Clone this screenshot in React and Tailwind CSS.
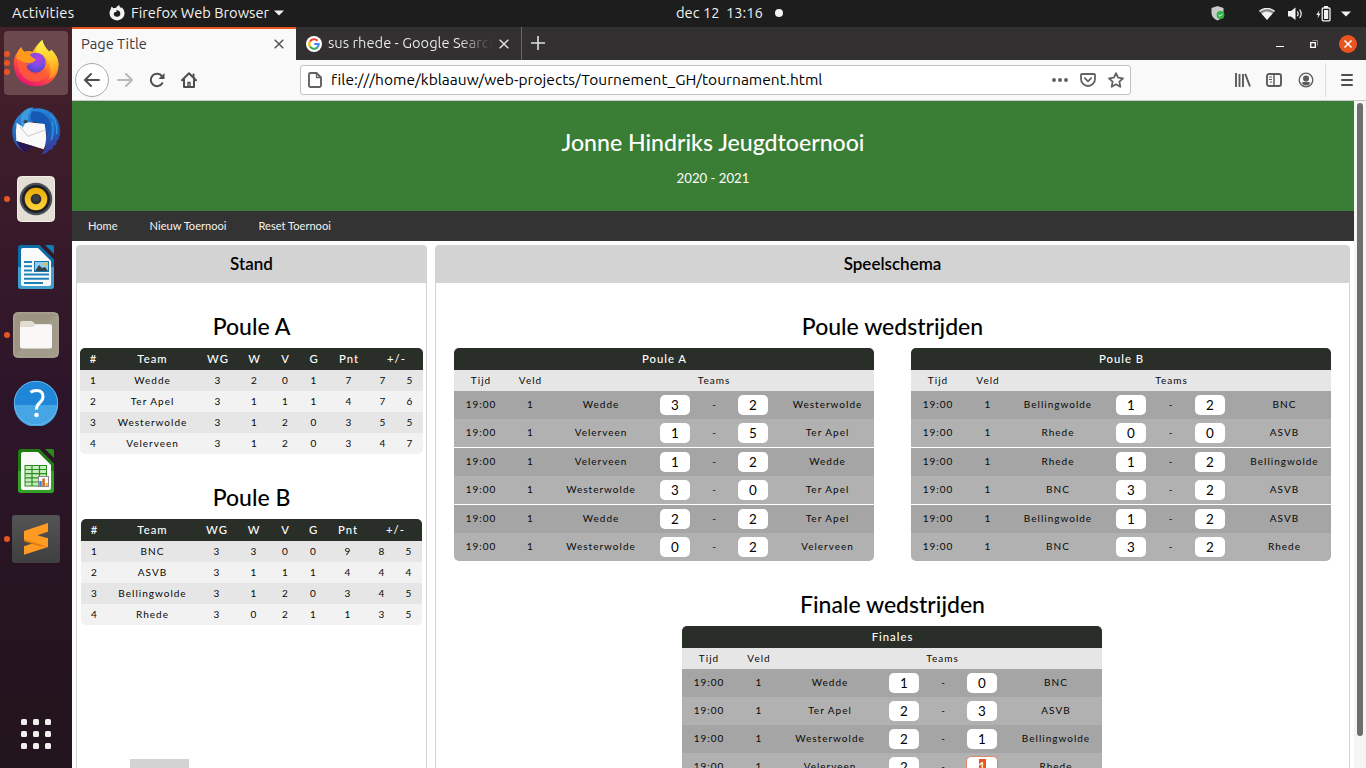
import React from "react";

const UI = "font-['Ubuntu','Noto_Sans',sans-serif]";

/* ---------- dock artwork ---------- */

function FirefoxLogo() {
  return (
    <svg width="48" height="50" viewBox="36 111 144 150">
      <defs>
        <linearGradient id="ffBody" x1="0.8" y1="0.1" x2="0.3" y2="1">
          <stop offset="0" stopColor="#ffe93f" />
          <stop offset="0.35" stopColor="#ffa21f" />
          <stop offset="0.65" stopColor="#ff4a3f" />
          <stop offset="1" stopColor="#e5127a" />
        </linearGradient>
        <linearGradient id="ffFlame" x1="0.4" y1="0" x2="0.6" y2="1">
          <stop offset="0" stopColor="#fff44f" />
          <stop offset="0.55" stopColor="#ffc72b" />
          <stop offset="1" stopColor="#ff8a1e" />
        </linearGradient>
        <radialGradient id="ffGlobe" cx="0.6" cy="0.3" r="0.8">
          <stop offset="0" stopColor="#b63fe0" />
          <stop offset="0.5" stopColor="#7a4be8" />
          <stop offset="1" stopColor="#4a3fb0" />
        </radialGradient>
      </defs>
      <path d="M64 138 Q66 147 72 152 Q84 148 98 152 Q110 130 127 117 Q132 138 148 152 L154 146 Q176 168 176 192 Q172 252 108 256 Q44 252 41 188 Q42 164 51 156 Q55 146 64 138Z" fill="url(#ffBody)" />
      <path d="M127 117 Q130 136 148 152 L154 146 Q176 166 175 192 Q170 222 146 236 Q160 206 144 180 Q132 156 106 154 Q112 130 127 117Z" fill="url(#ffFlame)" />
      <circle cx="107" cy="185" r="30" fill="url(#ffGlobe)" />
      <path d="M64 138 Q58 150 58 166 Q62 186 90 188 Q80 192 80 202 Q90 222 114 220 Q136 214 138 198 Q150 218 128 236 Q98 252 70 228 Q44 200 54 158Z" fill="#ff6036" opacity="0.75" />
      <path d="M50 160 Q56 145 64 139 Q67 149 74 154 Q84 152 90 162 Q96 171 107 174 Q106 182 90 187 Q66 184 50 174Z" fill="#ff9a1f" />
    </svg>
  );
}

function ThunderbirdLogo() {
  return (
    <svg width="50" height="50" viewBox="33 318 150 150">
      <defs>
        <linearGradient id="tb" x1="0.2" y1="0" x2="0.5" y2="1">
          <stop offset="0" stopColor="#2f8fe0" />
          <stop offset="0.6" stopColor="#1d62bd" />
          <stop offset="1" stopColor="#3b3b9c" />
        </linearGradient>
      </defs>
      <path d="M64 340 Q80 322 100 322 L98 326 Q140 320 164 348 Q188 380 176 418 L170 422 L169 434 L160 438 L158 448 L148 450 Q140 462 124 464 L136 444 L140 400 L120 362 L72 372 L50 424 L76 458 Q52 446 42 424 Q36 410 37 388 Q42 358 64 340Z" fill="url(#tb)" />
      <path d="M96 334 Q132 330 148 360 Q158 388 142 404 Q136 372 104 366 Q84 366 96 334Z" fill="#1558b4" />
      <path d="M50 368 L64 378 Q76 366 88 367 L134 372 L138 402 Q140 430 131 448 L49 423 Q46 396 50 368Z" fill="#f9f9f9" />
      <path d="M60 380 L84 409 L134 390" fill="none" stroke="#aab0b4" strokeWidth="2" />
      <path d="M50 424 L104 440 Q86 440 76 458 Q58 448 50 424Z" fill="#2a1554" />
      <path d="M66 342 Q82 324 98 324 Q84 334 84 358 Q74 370 68 384 Q58 366 66 342Z" fill="#3f9bdc" />
      <path d="M150 344 Q174 362 170 402 M156 364 Q164 390 154 420" fill="none" stroke="#2d9adf" strokeWidth="4" />
      <circle cx="76" cy="364" r="5" fill="#19202a" />
      <circle cx="75" cy="363" r="2" fill="#b5a16b" />
    </svg>
  );
}

function SpeakerLogo() {
  return (
    <svg width="38" height="46" viewBox="0 0 38 46">
      <defs>
        <linearGradient id="cone" x1="0" y1="0" x2="0" y2="1">
          <stop offset="0" stopColor="#e9ab07" />
          <stop offset="1" stopColor="#ffd33d" />
        </linearGradient>
      </defs>
      <rect x="0.5" y="0.5" width="37" height="45" rx="4" fill="#e3dfd4" stroke="#f1efe8" />
      <circle cx="19" cy="23" r="16.2" fill="#4a4f57" />
      <circle cx="19" cy="23" r="14" fill="#202124" />
      <circle cx="19" cy="23" r="11.3" fill="url(#cone)" />
      <circle cx="19" cy="23" r="5.3" fill="#2a2c30" />
      <circle cx="19" cy="22" r="3.6" fill="#3b3d42" />
    </svg>
  );
}

function WriterLogo() {
  return (
    <svg width="38" height="46" viewBox="0 0 38 46">
      <path d="M4 1H22.5L37 15.5V42a3 3 0 0 1-3 3H4a3 3 0 0 1-3-3V4a3 3 0 0 1 3-3Z" fill="#0d6ca6" />
      <path d="M1 23H37V42a3 3 0 0 1-3 3H4a3 3 0 0 1-3-3Z" fill="#3f9fce" />
      <path d="M6 4H21L34 17V40a2 2 0 0 1-2 2H6a2 2 0 0 1-2-2V6a2 2 0 0 1 2-2Z" fill="#fafafa" />
      <path d="M28 1H35a2 2 0 0 1 2 2V10Z" fill="#0e7cb5" />
      <path d="M7 18h8M7 22.2h8M7 26.4h8M7 30.6h25M7 34.8h25M7 39h19" stroke="#1e82b9" strokeWidth="2" />
      <rect x="17.5" y="17.5" width="14" height="10" fill="#8fcdf0" stroke="#1377ad" />
      <path d="M18 27l4-6 3 3 3-1 3 4Z" fill="#37424a" />
      <circle cx="28.5" cy="20" r="1.5" fill="#f5b82e" />
    </svg>
  );
}

function FilesLogo() {
  return (
    <svg width="46" height="46" viewBox="0 0 46 46">
      <rect x="0.7" y="0.7" width="44.6" height="44.6" rx="4" fill="#9d9582" stroke="#bdb7a8" />
      <path d="M1 45 45 1V42a3 3 0 0 1-3 3Z" fill="#a9a18f" opacity="0.6" />
      <path d="M7 11a2 2 0 0 1 2-2H19l3.5 3H37a2 2 0 0 1 2 2V20H7Z" fill="#e2ddd1" />
      <path d="M7 15H19.5L23 12.500H37a2 2 0 0 1 2 2V34.500a2 2 0 0 1-2 2H9a2 2 0 0 1-2-2Z" fill="#f9f8f6" />
    </svg>
  );
}

function HelpLogo() {
  return (
    <svg width="46" height="46" viewBox="0 0 46 46">
      <circle cx="23" cy="23" r="22" fill="#1f86d8" />
      <path d="M1 25H45A22 22 0 0 1 1 25Z" fill="#45a5e5" />
      <circle cx="23" cy="23" r="21.700" fill="none" stroke="#67b7ea" strokeWidth="1" />
      <path d="M17.500 12.300Q20 10.500 23.500 10.500Q30 10.500 30 16.500Q30 20 26.500 23Q23.500 25.500 23.500 29.500" fill="none" stroke="#fff" strokeWidth="3" />
      <circle cx="23.500" cy="35" r="2.300" fill="#fff" />
    </svg>
  );
}

function CalcLogo() {
  return (
    <svg width="38" height="46" viewBox="0 0 38 46">
      <path d="M4 1H22.500L37 15.500V42a3 3 0 0 1-3 3H4a3 3 0 0 1-3-3V4a3 3 0 0 1 3-3Z" fill="#1f7a14" />
      <path d="M1 23H37V42a3 3 0 0 1-3 3H4a3 3 0 0 1-3-3Z" fill="#35a026" />
      <path d="M6 4H21L34 17V40a2 2 0 0 1-2 2H6a2 2 0 0 1-2-2V6a2 2 0 0 1 2-2Z" fill="#fafafa" />
      <path d="M28 1H35a2 2 0 0 1 2 2V10Z" fill="#2a8a1c" />
      <rect x="8" y="17.500" width="21.500" height="20.500" fill="#c8eec0" stroke="#2c8a1e" />
      <path d="M8 21.500h21.500M8 25.700h21.500M8 29.800h21.500M8 34h21.500M15 17.500V38M22.500 17.500V38" stroke="#2c8a1e" strokeWidth="1.200" />
      <rect x="21.500" y="28.500" width="10" height="10" fill="#fff" stroke="#8a8a8a" />
      <path d="M23.500 38V33" stroke="#2e8ad0" strokeWidth="2.500" />
      <path d="M26.600 38V30.500" stroke="#d9601f" strokeWidth="2.500" />
      <path d="M29.700 38V35" stroke="#f5b82e" strokeWidth="2.500" />
    </svg>
  );
}

function SublimeLogo() {
  return (
    <svg width="48" height="48" viewBox="36 435 144 144">
      <defs>
        <linearGradient id="subl" x1="0" y1="0" x2="0" y2="1">
          <stop offset="0" stopColor="#545454" />
          <stop offset="1" stopColor="#3f3f3f" />
        </linearGradient>
      </defs>
      <rect x="36" y="435" width="144" height="144" rx="9" fill="url(#subl)" />
      <path d="M72 529 144 505V531L72 554Z" fill="#ff9a22" />
      <path d="M72 504 100 513 144 503V531L118 529 72 514Z" fill="#e07c10" />
      <path d="M72 483 144 459V485L112 496 144 505V531L72 508Z" fill="#ff9a22" />
    </svg>
  );
}

function AppGrid() {
  return (
    <div className="grid grid-cols-3 gap-[6px]">
      {[0, 1, 2, 3, 4, 5, 6, 7, 8].map((n) => (
        <span key={n} className="h-[6px] w-[6px] rounded-[1.5px] bg-[#f0efeb]" />
      ))}
    </div>
  );
}

function DockItem({ dots = 0, active = false, children }) {
  return (
    <div className="relative flex h-[68px] w-[72px] items-center justify-center">
      <div className={active ? "flex h-16 w-16 items-center justify-center rounded-[4px] bg-[#69494e]" : "flex h-16 w-16 items-center justify-center"}>
        {children}
      </div>
      <div className="absolute top-0 left-[4px] flex h-full flex-col items-center justify-center gap-[3px]">
        {Array.from({ length: dots }, (_, i) => (
          <span key={i} className="h-[6px] w-[6px] rounded-full bg-[#e95420]" />
        ))}
      </div>
    </div>
  );
}

function Dock() {
  return (
    <aside className="flex h-full w-[72px] shrink-0 flex-col justify-between bg-linear-to-b from-[#45202a] via-[#2d1529] via-50% to-[#22141c] pt-[2px] pb-[19px]">
      <div>
        <DockItem dots={3} active><FirefoxLogo /></DockItem>
        <DockItem><ThunderbirdLogo /></DockItem>
        <DockItem dots={1}><SpeakerLogo /></DockItem>
        <DockItem><WriterLogo /></DockItem>
        <DockItem dots={1}><FilesLogo /></DockItem>
        <DockItem><HelpLogo /></DockItem>
        <DockItem><CalcLogo /></DockItem>
        <DockItem dots={1}><SublimeLogo /></DockItem>
      </div>
      <div className="flex justify-center"><AppGrid /></div>
    </aside>
  );
}

/* ---------- top bar ---------- */

function Caret() {
  return <svg width="10" height="6" viewBox="0 0 10 6"><path d="M0 0.500H10L5 5.500Z" fill="#f2f2f2" /></svg>;
}

function TopBar() {
  return (
    <header className={`${UI} flex h-[27px] shrink-0 items-center bg-[#1d1d1d] text-[14.7px] text-[#f2f2f2]`}>
      <div className="flex w-[676px] shrink-0 items-center pl-3">
        <span className="w-[97px] tracking-[0.200px]">Activities</span>
        <svg width="16" height="16" viewBox="0 0 16 16" className="mr-[6px]">
          <path d="M2.800 1.500 4.300 3.200Q5.500 2.700 6.800 3.100Q8 0.800 10.200 0Q10.300 1.800 12 3L12.800 2.200Q15.700 5 15.600 8.200A7.500 7.200 0 0 1 0.500 8.200Q0.600 5.600 1.600 4.400Q2 2.600 2.800 1.500Z" fill="#f2f2f2" />
          <path d="M7 5.200Q10.800 4.800 11.300 8.200A3.300 3.300 0 0 1 4.700 8.700L5.300 7.500 7.900 6.500Z" fill="#1d1d1d" />
        </svg>
        <span className="w-[143px] whitespace-nowrap">Firefox Web Browser</span>
        <Caret />
      </div>
      <div className="flex items-center whitespace-pre">
        <span className="w-[50px]">dec 12</span>
        <span className="w-[49px]">13:16</span>
        <span className="h-2 w-2 rounded-full bg-[#f2f2f2]" />
      </div>
      <div className="flex flex-1 items-center justify-end pr-[15px]">
        <svg width="14" height="15" viewBox="0 0 14 15" className="mr-[34px]">
          <path d="M6.500 0 12.500 2V7.500Q12 12 6.500 14.500Q1 12 0.500 7.500V2Z" fill="#c9c9c9" />
          <circle cx="9.500" cy="9" r="3.900" fill="#2fb344" />
          <path d="m7.700 9 1.300 1.300 2.300-2.400" stroke="#fff" fill="none" />
        </svg>
        <svg width="16" height="12" viewBox="0 0 16 12" className="mr-[13px]">
          <path d="M0.500 3.500Q8-2.800 15.500 3.500L8 11.800Z" fill="#8b8b8b" />
          <path d="M0.300 3.400Q8-2.800 15.700 3.400" stroke="#f2f2f2" fill="none" strokeWidth="1.200" />
          <path d="M2.500 5.500Q8 1.500 13.500 5.500L8 12Z" fill="#f2f2f2" />
        </svg>
        <svg width="15" height="14" viewBox="0 0 15 14" className="mr-[13px]">
          <path d="M0 4H3L7.500 0.500V13L3 9.500H0Z" fill="#f2f2f2" />
          <path d="M9.300 4.300Q11 6.700 9.300 9.200M11.600 2.500Q14.800 6.700 11.600 11" stroke="#f2f2f2" fill="none" strokeWidth="1.200" />
        </svg>
        <svg width="15" height="16" viewBox="0 0 15 16" className="mr-[10px]">
          <path d="M3.500 4 0.300 9H2.300L1.500 12.500 4.500 7.500H2.600Z" fill="#f2f2f2" />
          <path d="M8 0h4v2H8Z" fill="#f2f2f2" />
          <rect x="6.200" y="2" width="7.800" height="12.800" rx="1" fill="none" stroke="#f2f2f2" strokeWidth="1.300" />
          <rect x="8" y="4" width="4.200" height="9" fill="#f2f2f2" />
        </svg>
        <Caret />
      </div>
    </header>
  );
}

/* ---------- browser chrome ---------- */

function Cross({ color, className }) {
  return <svg width="10" height="10" viewBox="0 0 10 10" className={className}><path d="M0.700 0.700 9.300 9.300M9.300 0.700 0.700 9.300" stroke={color} strokeWidth="1.500" /></svg>;
}

function TabStrip() {
  return (
    <div className={`${UI} flex h-[33px] shrink-0 bg-[#333031] text-[14.7px]`}>
      <div className="flex h-full w-[224px] items-center justify-between border-t-2 border-[#e95420] bg-[#f9f9fa] pr-[12px] pl-[9px] text-[#3a3a3e]">
        <span className="pb-px">Page Title</span>
        <Cross color="#555" className="mb-[2px]" />
      </div>
      <div className="flex h-full w-[226px] items-center border-r border-[#6a6869] pl-[10px] text-[#f0f0f0]">
        <svg width="16" height="16" viewBox="0 0 16 16" className="mr-[6px] shrink-0">
          <circle cx="8" cy="8" r="8" fill="#fff" />
          <g fill="none" strokeWidth="2.100">
            <path d="M11.500 4.700A4.800 4.800 0 0 0 4 5.600" stroke="#ea4335" />
            <path d="M4 5.500A4.800 4.800 0 0 0 4 10.600" stroke="#fbbc05" />
            <path d="M4 10.500A4.800 4.800 0 0 0 11.300 11.500" stroke="#34a853" />
            <path d="M11.200 11.600A4.800 4.800 0 0 0 12.700 8H8.200" stroke="#4285f4" />
          </g>
        </svg>
        <span className="mr-[7px] w-[164px] shrink-0 overflow-hidden bg-linear-to-r from-[#f0f0f0] from-80% to-[#333031] bg-clip-text whitespace-nowrap text-transparent">
          sus rhede - Google Search
        </span>
        <Cross color="#e0e0e0" />
      </div>
      <div className="flex items-center pl-[9px]">
        <svg width="14" height="14" viewBox="0 0 14 14" className="mb-px"><path d="M7 0V14M0 7H14" stroke="#e0e0e0" strokeWidth="1.600" /></svg>
      </div>
      <div className="flex flex-1 items-center justify-end pr-[9px]">
        <svg width="8" height="8" viewBox="0 0 8 8" className="mr-[26px]"><path d="M0 6.500H8" stroke="#fff" /></svg>
        <svg width="8" height="8" viewBox="0 0 8 8" className="mr-[21px]">
          <path d="M2.500 0.500H7.500V5.500" stroke="#8d8b8c" fill="none" />
          <path d="M0.700 2.700H5.300V7.300H0.700Z" stroke="#fff" strokeWidth="1.300" fill="none" />
        </svg>
        <svg width="18" height="18" viewBox="0 0 18 18">
          <circle cx="9" cy="9" r="9" fill="#e95420" />
          <path d="M5.500 5.500 12.500 12.500M12.500 5.500 5.500 12.500" stroke="#fff" strokeWidth="1.500" />
        </svg>
      </div>
    </div>
  );
}

function Toolbar() {
  return (
    <div className={`${UI} flex h-[41px] shrink-0 items-center border-b border-[#c9c9cb] bg-[#f9f9fa] text-[15.5px] text-black`}>
      <div className="flex w-[228px] items-center pl-[3px]">
        <div className="flex h-[34px] w-[34px] items-center justify-center rounded-full border border-[#a9a9ab] bg-white">
          <svg width="16" height="16" viewBox="0 0 16 16" fill="none" stroke="#4e4e50" strokeWidth="2" strokeLinecap="round" strokeLinejoin="round"><path d="M15 8H1.500M7 2 1 8l6 6" /></svg>
        </div>
        <svg width="16" height="16" viewBox="0 0 16 16" fill="none" stroke="#b9b9bb" strokeWidth="2" strokeLinecap="round" strokeLinejoin="round" className="ml-[8px]"><path d="M1 8H14.500M9 2 15 8l-6 6" /></svg>
        <svg width="16" height="16" viewBox="0 0 16 16" fill="none" stroke="#4e4e50" strokeWidth="2" className="ml-[16px]">
          <path d="M13.300 11.200A6.200 6.200 0 1 1 13 4.300" strokeLinecap="round" />
          <path d="M15.500 1V7H9.500Z" fill="#4e4e50" stroke="none" />
        </svg>
        <svg width="16" height="16" viewBox="0 0 16 16" fill="none" stroke="#4e4e50" strokeWidth="2" strokeLinejoin="round" strokeLinecap="round" className="ml-[16px]">
          <path d="M1 8.300 8 1.300 15 8.300M3 7.500V15H13V7.500" />
          <path d="M7 15V10.500H9V15" strokeWidth="1.400" />
          <path d="M12.500 5V2.500" />
        </svg>
      </div>
      <div className="flex h-[30px] w-[831px] items-center rounded-[3px] border border-[#c2c2c4] bg-white px-[7px]">
        <svg width="14" height="16" viewBox="0 0 14 16" fill="none" stroke="#626264" strokeWidth="1.900" strokeLinejoin="round" className="mr-[9px]">
          <path d="M2.500 1H8.500L13 5.500V13.500a1.500 1.500 0 0 1-1.500 1.500H2.500A1.500 1.500 0 0 1 1 13.500V2.500A1.500 1.500 0 0 1 2.500 1Z" />
          <path d="M8.500 1V5.500H13" strokeWidth="1.300" />
        </svg>
        <span className="flex-1 tracking-[0.030px]">file:///home/kblaauw/web-projects/Tournement_GH/tournament.html</span>
        <svg width="16" height="4" viewBox="0 0 16 4" fill="#626264" className="mr-[12px]"><circle cx="2" cy="2" r="2" /><circle cx="8" cy="2" r="2" /><circle cx="14" cy="2" r="2" /></svg>
        <svg width="16" height="14" viewBox="0 0 16 14" fill="none" stroke="#626264" strokeWidth="1.800" strokeLinecap="round" strokeLinejoin="round" className="mr-[12px]">
          <path d="M2 1H14a1 1 0 0 1 1 1V6A7 7 0 0 1 1 6V2a1 1 0 0 1 1-1Z" /><path d="M4.800 5.200 8 8.300l3.200-3.100" />
        </svg>
        <svg width="16" height="16" viewBox="0 0 16 16" fill="none" stroke="#626264" strokeWidth="1.800" strokeLinejoin="round" className="mr-[-1px]">
          <path d="M8 1.200 10.100 5.700 15 6.300 11.400 9.700 12.300 14.800 8 12.300 3.700 14.800 4.600 9.700 1 6.300 5.900 5.700Z" />
        </svg>
      </div>
      <div className="flex flex-1 items-center justify-end">
        <svg width="16" height="14" viewBox="0 0 16 14" stroke="#5b5b5d" strokeWidth="1.900" className="mr-[15px]"><path d="M1 0V14M4.500 1V14M8 1V14M10.200 0.800 15 13.500" /></svg>
        <svg width="16" height="14" viewBox="0 0 16 14" fill="none" stroke="#5b5b5d" strokeWidth="1.900" className="mr-[16px]">
          <rect x="1" y="1" width="14" height="12" rx="2" /><path d="M8 1V13" strokeWidth="1.500" /><path d="M3 4H6M3 6.500H6M4 9H6" strokeWidth="1" />
        </svg>
        <svg width="16" height="16" viewBox="0 0 16 16" className="mr-[11px]">
          <circle cx="8" cy="8" r="6.800" fill="none" stroke="#5b5b5d" strokeWidth="1.300" />
          <circle cx="8" cy="6.500" r="3" fill="#5b5b5d" /><path d="M3.500 10.800Q8 8.800 12.500 10.800Q11 13.500 8 13.500Q5 13.500 3.500 10.800Z" fill="#5b5b5d" />
        </svg>
        <div className="h-[34px] w-px bg-[#dcdcde]" />
        <svg width="12" height="12" viewBox="0 0 12 12" stroke="#4e4e50" strokeWidth="2" strokeLinecap="round" className="mr-[13px] ml-[15px]"><path d="M1 1H11M1 6H11M1 11H11" /></svg>
      </div>
    </div>
  );
}

/* ---------- page ---------- */

const standings = [
  {
    title: "Poule A",
    table: "w-[343px]",
    cols: "grid-cols-[26px_92px_39px_34px_28px_29px_41px_27px_27px]",
    rows: [
      [1, "Wedde", 3, 2, 0, 1, 7, 7, 5],
      [2, "Ter Apel", 3, 1, 1, 1, 4, 7, 6],
      [3, "Westerwolde", 3, 1, 2, 0, 3, 5, 5],
      [4, "Velerveen", 3, 1, 2, 0, 3, 4, 7],
    ],
  },
  {
    title: "Poule B",
    table: "w-[341px]",
    cols: "grid-cols-[26px_90px_39px_35px_28px_28px_41px_27px_27px]",
    rows: [
      [1, "BNC", 3, 3, 0, 0, 9, 8, 5],
      [2, "ASVB", 3, 1, 1, 1, 4, 4, 4],
      [3, "Bellingwolde", 3, 1, 2, 0, 3, 4, 5],
      [4, "Rhede", 3, 0, 2, 1, 1, 3, 5],
    ],
  },
];

const pouleA = [
  ["Wedde", 3, 2, "Westerwolde"],
  ["Velerveen", 1, 5, "Ter Apel"],
  ["Velerveen", 1, 2, "Wedde"],
  ["Westerwolde", 3, 0, "Ter Apel"],
  ["Wedde", 2, 2, "Ter Apel"],
  ["Westerwolde", 0, 2, "Velerveen"],
];

const pouleB = [
  ["Bellingwolde", 1, 2, "BNC"],
  ["Rhede", 0, 0, "ASVB"],
  ["Rhede", 1, 2, "Bellingwolde"],
  ["BNC", 3, 2, "ASVB"],
  ["Bellingwolde", 1, 2, "ASVB"],
  ["BNC", 3, 2, "Rhede"],
];

const finals = [
  ["Wedde", 1, 0, "BNC"],
  ["Ter Apel", 2, 3, "ASVB"],
  ["Westerwolde", 2, 1, "Bellingwolde"],
  ["Velerveen", 2, 1, "Rhede"],
];

function Heading({ children }) {
  return <h2 className="flex h-[42px] items-center justify-center pb-[2px] text-[23px] font-medium text-black">{children}</h2>;
}

function StandingTable({ table, cols, rows }) {
  return (
    <div className={`${table} mx-auto overflow-hidden rounded-[5px] text-center text-[10px] tracking-[1px] text-[#080808]`}>
      <div className={`grid ${cols} h-[22px] items-center bg-[#292e29] text-[11.3px] font-medium text-white`}>
        {["#", "Team", "WG", "W", "V", "G", "Pnt"].map((label) => <span key={label} className="pl-px">{label}</span>)}
        <span className="col-span-2 pl-px">+/-</span>
      </div>
      {rows.map((row) => (
        <div key={row[0]} className={`grid ${cols} h-[21px] items-center odd:bg-[#f2f2f2] even:bg-[#e6e6e6]`}>
          {row.map((cell, i) => <span key={i} className="pl-px">{cell}</span>)}
        </div>
      ))}
    </div>
  );
}

function Score({ value, focused }) {
  if (focused) {
    return (
      <span className="mx-auto flex h-[22px] w-8 items-center justify-center rounded-[5px] border border-[#e0866a] bg-white text-[13.4px] tracking-normal">
        <span className="flex h-[17px] w-[7px] items-center justify-center bg-[#e95420] text-white">{value}</span>
      </span>
    );
  }
  return <span className="mx-auto flex h-5 w-[30px] items-center justify-center rounded-[5px] bg-white text-[13.4px] tracking-normal text-black">{value}</span>;
}

function MatchCell({ children }) {
  return <span className="pb-[2px] pl-px">{children}</span>;
}

function MatchTable({ title, cols, rows, grouped = false, focusRow = -1 }) {
  return (
    <div className="w-[420px] overflow-hidden rounded-[5px] text-center text-[10px] tracking-[1px] text-[#080808]">
      <div className="flex h-[22px] items-center justify-center bg-[#292e29] pl-px text-[11.3px] font-medium text-white">{title}</div>
      <div className={`grid ${cols} h-[21px] items-center bg-[#e6e6e6]`}>
        <span className="pl-px">Tijd</span><span className="pl-px">Veld</span><span className="col-span-5 pl-px">Teams</span>
      </div>
      {rows.map(([home, a, b, away], i) => (
        <div key={i} className={`grid ${cols} items-center ${i % 2 ? "bg-[#b1b1b1]" : "bg-[#a5a5a5]"} ${grouped && i > 0 && i % 2 === 0 ? "h-[29px] border-t border-white" : "h-[28px]"}`}>
          <MatchCell>19:00</MatchCell><MatchCell>1</MatchCell><MatchCell>{home}</MatchCell>
          <Score value={a} /><MatchCell>-</MatchCell><Score value={b} focused={i === focusRow} />
          <MatchCell>{away}</MatchCell>
        </div>
      ))}
    </div>
  );
}

function Card({ title, width, children }) {
  return (
    <section className={`${width} flex flex-col overflow-hidden rounded-t-[4px] border-x border-[#d3d3d3]`}>
      <h3 className="flex h-[38px] shrink-0 items-center justify-center bg-[#d3d3d3] text-[17px] font-semibold text-black">{title}</h3>
      {children}
    </section>
  );
}

function Page() {
  return (
    <main className="flex min-h-0 flex-1 bg-white font-['Lato',sans-serif]">
      <div className="flex w-[1282px] shrink-0 flex-col overflow-hidden">
        <div className="h-[110px] shrink-0 bg-[#3a7d34] text-center text-white">
          <h1 className="pt-[24px] text-[23.1px] leading-[34px] font-medium">Jonne Hindriks Jeugdtoernooi</h1>
          <p className="pt-[9px] text-[13.2px] leading-5">2020 - 2021</p>
        </div>
        <nav className="flex h-[30px] shrink-0 items-center gap-8 bg-[#333] px-4 text-[11.1px] text-[#f2f2f2]">
          <span>Home</span><span>Nieuw Toernooi</span><span>Reset Toernooi</span>
        </nav>
        <div className="flex min-h-0 flex-1 gap-2 px-1 pt-1">
          <Card title="Stand" width="w-[351px]">
            {standings.map((s) => (
              <div key={s.title} className="pt-[23px]">
                <Heading>{s.title}</Heading>
                <StandingTable {...s} />
              </div>
            ))}
            <div className="mt-[134px] ml-[53px] h-5 w-[59px] bg-[#d3d3d3]" />
          </Card>
          <Card title="Speelschema" width="w-[915px]">
            <div className="flex flex-col pt-[23px]">
              <Heading>Poule wedstrijden</Heading>
              <div className="flex gap-[37px] pl-[18px]">
                <MatchTable title="Poule A" rows={pouleA} grouped cols="grid-cols-[53px_46px_95px_54px_24px_54px_94px]" />
                <MatchTable title="Poule B" rows={pouleB} grouped cols="grid-cols-[53px_47px_93px_54px_25px_54px_94px]" />
              </div>
            </div>
            <div className="flex flex-col pt-[23px]">
              <Heading>Finale wedstrijden</Heading>
              <div className="pl-[246px]">
                <MatchTable title="Finales" rows={finals} focusRow={3} cols="grid-cols-[53px_47px_95px_54px_24px_54px_93px]" />
              </div>
            </div>
          </Card>
        </div>
      </div>
      <div className="flex flex-1 justify-center bg-[#f5f5f5] pt-[2px]">
        <div className="h-[633px] w-[6px] rounded-full bg-[#6e6e6e]" />
      </div>
    </main>
  );
}

export default function App() {
  return (
    <div className="flex h-[768px] w-[1366px] flex-col overflow-hidden">
      <TopBar />
      <div className="flex min-h-0 flex-1">
        <Dock />
        <div className="flex min-w-0 flex-1 flex-col">
          <TabStrip />
          <Toolbar />
          <Page />
        </div>
      </div>
    </div>
  );
}
